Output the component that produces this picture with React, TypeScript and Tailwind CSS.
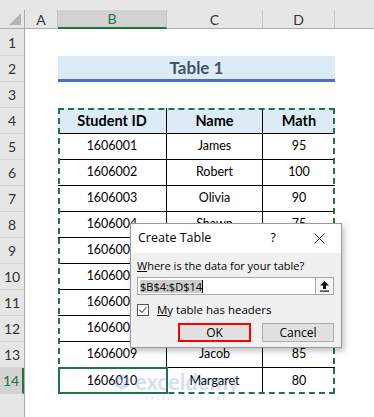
import React from 'react';

// C and D of rows 9-12 sit fully under the dialog, so they stay blank
const rows: [string, string, string][] = [
  ['1606001', 'James', '95'],
  ['1606002', 'Robert', '100'],
  ['1606003', 'Olivia', '90'],
  ['1606004', 'Shawn', '75'],
  ['1606005', '', ''],
  ['1606006', '', ''],
  ['1606007', '', ''],
  ['1606008', '', ''],
  ['1606009', 'Jacob', '85'],
  ['1606010', 'Margaret', '80'],
];

const ColHead = ({ w, label, active }: { w: string; label: string; active?: boolean }) => (
  <div
    className={`${w} flex h-[19px] items-center justify-center border-r border-[#c6c6c6] text-[14px] ${
      active ? 'border-b-2 border-b-[#217346] bg-[#d2d2d2] text-[#217346]' : 'border-b border-b-[#ababab] text-[#333]'
    }`}
  >
    {label}
  </div>
);

const RowHead = ({ n, h, active }: { n?: number; h: string; active?: boolean }) => (
  <div
    className={`${h} flex items-center justify-center border-b border-[#d4d4d4] text-[14px] ${
      active ? 'border-r-2 border-r-[#217346] bg-[#d2d2d2] text-[#217346]' : 'text-[#333]'
    }`}
  >
    {n}
  </div>
);

const CreateTableDialog = () => (
  <div className="absolute left-[130px] top-[223px] flex h-[125px] w-[212px] flex-col border border-[#9a9a9a] bg-[#f0f0f0] font-['Open_Sans',sans-serif] text-[11px] text-black shadow-[2px_3px_6px_rgba(0,0,0,0.25)]">
    <div className="flex h-[29px] items-center bg-white pl-[7px]">
      <span className="text-[12.5px]">Create Table</span>
      <span className="ml-auto mr-[38px] text-[12.5px]">?</span>
      <svg width="11" height="11" viewBox="0 0 11 11" className="mr-[16px]">
        <path d="M0.5 0.5 L10.5 10.5 M10.5 0.5 L0.5 10.5" stroke="#222" strokeWidth="1" />
      </svg>
    </div>
    <div className="flex flex-1 flex-col px-[6px] pt-[5px]">
      <div className="h-[16px] leading-[16px]">
        <span className="underline">W</span>here is the data for your table?
      </div>
      <div className="mt-[3px] flex h-[18px] w-[197px] border border-[#a8a8a8] bg-white">
        <div className="flex flex-1 items-center pl-[2px]">
          <span className="bg-[#cccccc] leading-[13px]">$B$4:$D$14</span>
          <span className="h-[13px] w-px bg-black" />
        </div>
        <div className="flex w-[18px] items-center justify-center border-l border-[#a8a8a8] bg-[#f4f4f4]">
          <svg width="11" height="12" viewBox="0 0 11 12">
            <path d="M5.5 1 L10 5.5 L7 5.5 L7 9 L4 9 L4 5.5 L1 5.5 Z" fill="#111" />
            <rect x="1" y="10.5" width="9" height="1.2" fill="#111" />
          </svg>
        </div>
      </div>
      <div className="mt-[8px] flex items-center">
        <div className="flex h-[12px] w-[12px] items-center justify-center border border-[#555] bg-white">
          <svg width="10" height="10" viewBox="0 0 10 10">
            <path d="M1.5 5 L4 7.5 L8.5 2" fill="none" stroke="#555" strokeWidth="1.1" />
          </svg>
        </div>
        <span className="ml-[8px] text-[11.5px] leading-[13px]">
          <span className="underline">M</span>y table has headers
        </span>
      </div>
      <div className="mt-[7px] flex">
        <button className="ml-[41px] flex h-[19px] w-[73px] items-center justify-center border-2 border-[#ff0000] bg-[#e1e1e1] text-[12px]">
          OK
        </button>
        <button className="ml-[11px] flex h-[19px] w-[72px] items-center justify-center border border-[#adadad] bg-[#e1e1e1] text-[12px]">
          Cancel
        </button>
      </div>
    </div>
  </div>
);

const Watermark = () => (
  <div className="pointer-events-none absolute left-[112px] top-[371px] flex flex-col items-center opacity-25">
    <div className="flex items-center gap-[3px]">
      <svg width="20" height="20" viewBox="0 0 20 20">
        <path d="M10 2 L17 6 L17 14 L10 18 L3 14 L3 6 Z" fill="#5b7fd6" />
        <path d="M7 7 L13 13 M13 7 L7 13" stroke="#fff" strokeWidth="2" />
      </svg>
      <span className="text-[22px] font-bold leading-[22px] text-[#5b7fd6]">exceldemy</span>
    </div>
    <span className="ml-[20px] text-[6px] tracking-[2px] text-[#5b7fd6]">EXCEL · DATA · BI</span>
  </div>
);

export default function App() {
  return (
    <div className="relative h-[417px] w-[374px] overflow-hidden bg-white font-['Lato',sans-serif] text-black">
      {/* column headers */}
      <div className="flex h-[29px] bg-[#e6e6e6] pt-[10px]">
        <div className="relative flex h-[19px] w-[25px] items-end justify-end border-r border-b border-[#ababab] pb-[3px] pr-[3px]">
          <svg width="12" height="12" viewBox="0 0 12 12">
            <path d="M12 0 L12 12 L0 12 Z" fill="#b4b4b4" />
          </svg>
        </div>
        <ColHead w="w-[33px]" label="A" />
        <ColHead w="w-[109px]" label="B" active />
        <ColHead w="w-[96px]" label="C" />
        <ColHead w="w-[72px]" label="D" />
        <div className="h-[19px] flex-1 border-b border-[#ababab]" />
      </div>

      <div className="flex">
        {/* row headers */}
        <div className="flex w-[25px] flex-col border-r border-[#ababab] bg-[#e6e6e6]">
          <RowHead n={1} h="h-[27px]" />
          {Array.from({ length: 12 }, (_, i) => (
            <RowHead key={i} n={i + 2} h="h-[26px]" />
          ))}
          <RowHead n={14} h="h-[26px]" active />
          <RowHead h="h-[26px]" />
        </div>

        <div className="w-[33px]" />

        {/* B:D */}
        <div className="flex w-[277px] flex-col">
          <div className="h-[27px]" />
          <div className="flex h-[26px] items-center justify-center border-b-[3px] border-[#4472c4] bg-[#ddebf7] text-[17px] font-bold text-[#44546a]">
            Table 1
          </div>
          <div className="h-[26px]" />

          <div className="relative">
            <div className="flex h-[26px] bg-[#ddebf7] text-[14.5px] font-bold">
              <div className="flex w-[109px] items-center justify-center border-r border-b border-black">Student ID</div>
              <div className="flex w-[96px] items-center justify-center border-r border-b border-black">Name</div>
              <div className="flex w-[72px] items-center justify-center border-b border-black">Math</div>
            </div>
            {rows.map(([id, name, math], i) => (
              <div key={id} className="flex h-[26px] text-[12.5px]">
                <div className={`flex w-[109px] items-center justify-center border-r border-black ${i < rows.length - 1 ? 'border-b' : ''}`}>{id}</div>
                <div className={`flex w-[96px] items-center justify-center border-r border-black ${i < rows.length - 1 ? 'border-b' : ''}`}>{name}</div>
                <div className={`flex w-[72px] items-center justify-center border-black ${i < rows.length - 1 ? 'border-b' : ''}`}>{math}</div>
              </div>
            ))}
            {/* active cell B14 */}
            <div className="absolute bottom-0 left-0 h-[27px] w-[110px] border-2 border-[#217346]" />
            {/* selection marquee */}
            <div className="absolute inset-0 border-2 border-dashed border-[#217346]" />
          </div>
        </div>
      </div>

      <CreateTableDialog />
      <Watermark />
    </div>
  );
}
